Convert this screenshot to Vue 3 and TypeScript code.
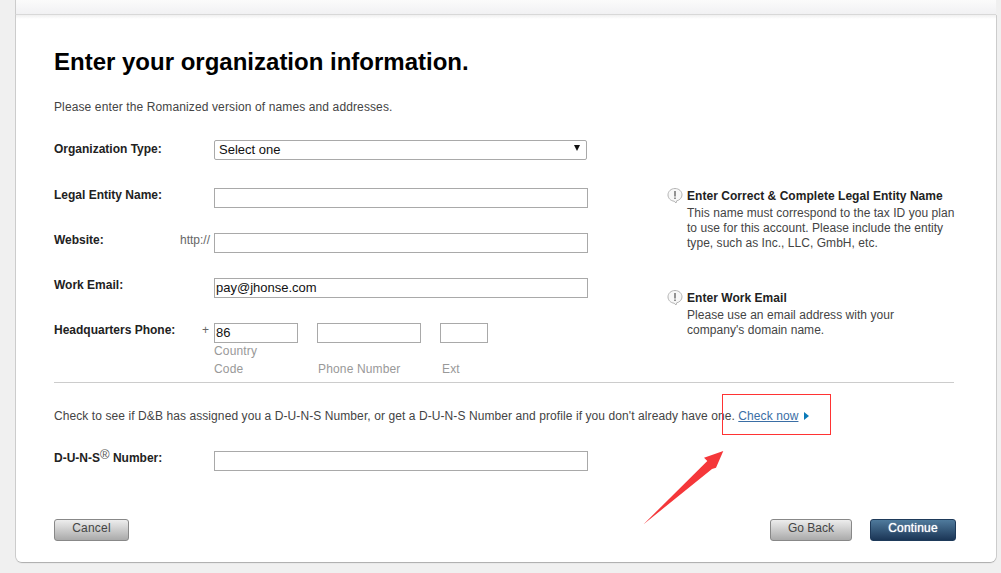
<script setup lang="ts">
import { ref } from 'vue'

const email = ref('pay@jhonse.com')
const code = ref('86')
</script>

<template>
  <div class="page">
    <div class="topbar"></div>
    <div class="card">
      <h1>Enter your organization information.</h1>
      <p class="intro">Please enter the Romanized version of names and addresses.</p>

      <div class="upper">
        <div class="fields">
          <div class="row first">
            <label>Organization Type:</label>
            <div class="selectbox">
              <select>
                <option>Select one</option>
              </select>
              <svg class="caret" width="6" height="6" viewBox="0 0 6 6"><path d="M0 0h6L3 6z" fill="#111" /></svg>
            </div>
          </div>
          <div class="row">
            <label>Legal Entity Name:</label>
            <input type="text" class="wide" />
          </div>
          <div class="row">
            <label>Website:</label>
            <span class="prefix">http://</span>
            <input type="text" class="wide" />
          </div>
          <div class="row">
            <label>Work Email:</label>
            <input type="text" class="wide" v-model="email" />
          </div>
          <div class="row phone">
            <label>Headquarters Phone:</label>
            <span class="prefix plus">+</span>
            <div class="part p1">
              <input type="text" v-model="code" />
              <span>Country Code</span>
            </div>
            <div class="part p2">
              <input type="text" />
              <span>Phone Number</span>
            </div>
            <div class="part p3">
              <input type="text" />
              <span>Ext</span>
            </div>
          </div>
        </div>

        <div class="hints">
          <div class="hint">
            <svg class="bubble" width="16" height="16" viewBox="0 0 16 16">
              <path d="M8 .5C4.100.5 1 3.300 1 6.900c0 3.300 2.700 6 6.100 6.300L9 15l.6-2.100c3-.7 5.400-3.100 5.400-6C15 3.300 11.900.5 8 .5z" fill="#f7f7f7" stroke="#b4b4b4" />
              <path d="M8 3v5.500" stroke="#666" stroke-width="1.400" />
              <path d="M8 9.500v1.500" stroke="#666" stroke-width="1.400" />
            </svg>
            <div>
              <strong>Enter Correct &amp; Complete Legal Entity Name</strong>
              <p>This name must correspond to the tax ID you plan to use for this account. Please include the entity type, such as Inc., LLC, GmbH, etc.</p>
            </div>
          </div>
          <div class="hint second">
            <svg class="bubble" width="16" height="16" viewBox="0 0 16 16">
              <path d="M8 .5C4.100.5 1 3.300 1 6.900c0 3.300 2.700 6 6.100 6.300L9 15l.6-2.100c3-.7 5.400-3.100 5.400-6C15 3.300 11.900.5 8 .5z" fill="#f7f7f7" stroke="#b4b4b4" />
              <path d="M8 3v5.500" stroke="#666" stroke-width="1.400" />
              <path d="M8 9.500v1.500" stroke="#666" stroke-width="1.400" />
            </svg>
            <div>
              <strong>Enter Work Email</strong>
              <p class="short">Please use an email address with your company's domain name.</p>
            </div>
          </div>
        </div>
      </div>

      <div class="divider"></div>

      <p class="check">
        Check to see if D&amp;B has assigned you a D-U-N-S Number, or get a D-U-N-S Number and profile if you don't already have one.
        <a href="#">Check now</a>
        <svg class="tri" width="5" height="8" viewBox="0 0 5 8"><path d="M0 0l5 4-5 4z" fill="#0b7ab8" /></svg>
      </p>

      <div class="row duns">
        <label>D-U-N-S<sup>®</sup> Number:</label>
        <input type="text" class="wide" />
      </div>

      <div class="actions">
        <button class="btn grey cancel">Cancel</button>
        <div class="right">
          <button class="btn grey back">Go Back</button>
          <button class="btn blue">Continue</button>
        </div>
      </div>

      <div class="redbox"></div>
      <svg class="arrow" width="90" height="80" viewBox="0 0 90 80">
        <path d="M3.300 76.500L67.300 13 64 9.700 83.300 3 76 19.700 72 21z" fill="#f5373a" />
      </svg>
    </div>
  </div>
</template>

<style scoped>
.page {
  width: 1001px;
  height: 573px;
  overflow: hidden;
  background: #f0f0f0;
  font-family: "Liberation Sans", Arial, sans-serif;
  font-size: 12px;
  color: #444;
}

.topbar {
  box-sizing: border-box;
  height: 15px;
  width: 981px;
  margin-left: 15px;
  background: linear-gradient(#fbfbfb, #f1f1f3);
  border-left: 1px solid #ccc;
  border-bottom: 1px solid #d8d8d8;
}

.card {
  position: relative;
  box-sizing: border-box;
  height: 547px;
  width: 980px;
  margin-left: 16px;
  padding: 35px 0 0 38px;
  background: linear-gradient(#f0f0f0, #fff 4px);
  border-radius: 0 0 6px 6px;
  box-shadow: -1px 0 0 #ccc, 0 1px 1px #aaa, 1px 0 0 #d0d0d0;
}

h1 {
  margin: 0;
  font-size: 24px;
  line-height: 24px;
  font-weight: bold;
  color: #000;
}

.intro {
  margin: 26px 0 0;
  line-height: 14px;
  letter-spacing: .12px;
}

.upper {
  display: flex;
}

.fields {
  width: 534px;
}

.row {
  display: flex;
  height: 20px;
  margin-top: 25px;
}

.row.first {
  margin-top: 26px;
  margin-bottom: 28px;
}

.row.first + .row {
  margin-top: 0;
}

label {
  flex: none;
  width: 126px;
  font-weight: bold;
  color: #222;
  line-height: 14px;
}

.row.first label {
  padding-top: 2px;
}

.prefix {
  flex: none;
  width: 28px;
  margin-right: 6px;
  color: #666;
  line-height: 14px;
  text-align: right;
}

.prefix.plus {
  width: 29px;
  margin-right: 5px;
}

.row:not(:has(.prefix)) label {
  width: 160px;
}

input,
select {
  box-sizing: border-box;
  height: 20px;
  margin: 0;
  border: 1px solid #a9a9a9;
  background: #fff;
  font-family: inherit;
  font-size: 13px;
  color: #111;
  padding: 0 1px 2px;
  outline: none;
}

.wide {
  width: 374px;
}

.selectbox {
  position: relative;
  width: 373px;
}

select {
  width: 100%;
  appearance: none;
  border-radius: 2px;
  padding-left: 4px;
}

.caret {
  position: absolute;
  right: 7px;
  top: 5px;
}

.phone {
  height: auto;
}

.part {
  display: flex;
  flex-direction: column;
  color: #999;
  line-height: 18px;
  letter-spacing: .15px;
}

.part input {
  width: 100%;
}

.p1 {
  width: 84px;
  margin-right: 19px;
}

.p1 span {
  width: 50px;
  margin-top: -1px;
}

.p2 {
  width: 104px;
  margin-right: 19px;
}

.p2 span {
  margin-top: 17px;
  padding-left: 1px;
}

.p3 {
  width: 48px;
}

.p3 span {
  margin-top: 17px;
  padding-left: 2px;
}

.hints {
  margin-left: 79px;
  padding-top: 75px;
  width: 290px;
}

.hint {
  display: flex;
  gap: 4px;
  line-height: 15px;
  letter-spacing: .04px;
}

.hint.second {
  margin-top: 40px;
}

.hint strong {
  color: #222;
  display: block;
  margin-bottom: 2px;
}

.hint p {
  margin: 0;
  width: 272px;
}

.hint p.short {
  width: 240px;
}

.bubble {
  flex: none;
  margin-top: -1px;
}

.divider {
  width: 900px;
  height: 1px;
  margin-top: 4px;
  background: #ccc;
}

.check {
  margin: 25px 0 0;
  line-height: 16px;
  letter-spacing: .085px;
}

.check a {
  color: #3a6ea5;
}

.tri {
  margin-left: 6px;
}

.duns {
  margin-top: 27px;
}

sup {
  font-size: 13px;
  font-weight: normal;
  line-height: 0;
  color: #555;
  vertical-align: 3px;
}

.actions {
  display: flex;
  justify-content: space-between;
  width: 902px;
  margin-top: 48px;
}

.right {
  display: flex;
  gap: 18px;
}

.btn {
  box-sizing: border-box;
  height: 22px;
  padding: 0 0 5px;
  border-radius: 3px;
  font-family: inherit;
  font-size: 12px;
}

.grey {
  border: 1px solid #888;
  background: linear-gradient(#ededed, #aaa);
  color: #444;
}

.cancel {
  width: 75px;
  letter-spacing: .2px;
}

.back {
  width: 82px;
}

.blue {
  width: 86px;
  border: 1px solid #1e3a5a;
  background: linear-gradient(#4f7a9c, #1b3656);
  color: #fff;
  letter-spacing: .2px;
  text-shadow: 0 0 1px #fff;
}

.redbox {
  position: absolute;
  left: 706px;
  top: 379px;
  width: 107px;
  height: 39px;
  border: 1px solid #f33;
}

.arrow {
  position: absolute;
  left: 624px;
  top: 433px;
}
</style>

<style>
body {
  margin: 0;
}
</style>
